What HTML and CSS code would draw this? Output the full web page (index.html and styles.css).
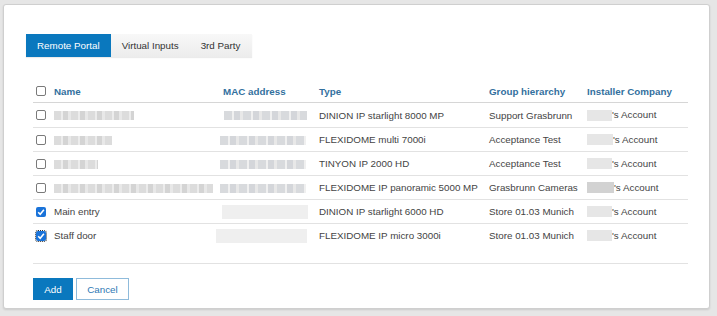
FILE: index.html
```html
<!DOCTYPE html>
<html>
<head>
<meta charset="utf-8">
<link rel="stylesheet" href="styles.css">
</head>
<body>
<div class="card">
  <div class="tabs">
    <div class="tab active">Remote Portal</div>
    <div class="tab">Virtual Inputs</div>
    <div class="tab last">3rd Party</div>
  </div>
  <div class="table">
    <div class="row head">
      <span class="cb"></span>
      <span>Name</span>
      <span>MAC address</span>
      <span>Type</span>
      <span>Group hierarchy</span>
      <span>Installer Company</span>
    </div>
    <div class="row">
      <span class="cb"></span>
      <span><i class="blur b1" style="width:80px"></i></span>
      <span><i class="blur b2" style="width:83px;margin-left:1px"></i></span>
      <span>DINION IP starlight 8000 MP</span>
      <span>Support Grasbrunn</span>
      <span class="acct"><i class="blur b3" style="width:25px"></i>'s Account</span>
    </div>
    <div class="row">
      <span class="cb"></span>
      <span><i class="blur b1" style="width:58px"></i></span>
      <span><i class="blur b2" style="width:86px;margin-left:-3px"></i></span>
      <span>FLEXIDOME multi 7000i</span>
      <span>Acceptance Test</span>
      <span class="acct"><i class="blur b3" style="width:26px"></i>'s Account</span>
    </div>
    <div class="row">
      <span class="cb"></span>
      <span><i class="blur b1" style="width:44px"></i></span>
      <span><i class="blur b2" style="width:86px;margin-left:-3px"></i></span>
      <span>TINYON IP 2000 HD</span>
      <span>Acceptance Test</span>
      <span class="acct"><i class="blur b3" style="width:25px"></i>'s Account</span>
    </div>
    <div class="row">
      <span class="cb"></span>
      <span><i class="blur b1" style="width:159px"></i></span>
      <span><i class="blur b2" style="width:86px;margin-left:-3px"></i></span>
      <span>FLEXIDOME IP panoramic 5000 MP</span>
      <span>Grasbrunn Cameras</span>
      <span class="acct"><i class="blur b4" style="width:27px"></i>'s Account</span>
    </div>
    <div class="row">
      <span class="cb on"><svg viewBox="0 0 10 10" width="10" height="10"><path d="M2.2 5.2 L4.2 7.2 L7.9 2.8" fill="none" stroke="#fff" stroke-width="1.6"/></svg></span>
      <span>Main entry</span>
      <span><i class="blur b5" style="width:86px;margin-left:-1px"></i></span>
      <span>DINION IP starlight 6000 HD</span>
      <span>Store 01.03 Munich</span>
      <span class="acct"><i class="blur b3" style="width:25px"></i>'s Account</span>
    </div>
    <div class="row last">
      <span class="cb on focus"><svg viewBox="0 0 10 10" width="10" height="10"><path d="M2.2 5.2 L4.2 7.2 L7.9 2.8" fill="none" stroke="#fff" stroke-width="1.6"/></svg></span>
      <span>Staff door</span>
      <span><i class="blur b5" style="width:91px;margin-left:-7px"></i></span>
      <span>FLEXIDOME IP micro 3000i</span>
      <span>Store 01.03 Munich</span>
      <span class="acct"><i class="blur b3" style="width:25px"></i>'s Account</span>
    </div>
  </div>
  <div class="footer">
    <button class="btn primary">Add</button>
    <button class="btn secondary">Cancel</button>
  </div>
</div>
</body>
</html>
```

FILE: styles.css
```css
html, body {
  margin: 0;
  padding: 0;
}
body {
  background: #e6e6e6;
  font-family: "Liberation Sans", Arial, sans-serif;
  font-size: 9.8px;
  color: #444;
  width: 717px;
  height: 316px;
  overflow: hidden;
}
.card {
  margin: 4px 7px 0 3px;
  height: 305px;
  box-sizing: border-box;
  background: #fff;
  border: 1px solid #cfcfcf;
  border-radius: 3px;
  box-shadow: 0 1px 2px rgba(0,0,0,0.12);
  padding: 29px 21px 0 22px;
}
.tabs {
  display: inline-flex;
  height: 23px;
  background: linear-gradient(#f8f8f8, #ececec);
  box-shadow: 0 1px 1px rgba(0,0,0,0.08);
  vertical-align: top;
}
.tab {
  display: flex;
  align-items: center;
  padding: 0 11px;
  color: #333;
  white-space: nowrap;
}
.tab.last { padding-right: 12px; }
.tab.active {
  background: #0a78be;
  color: #fff;
}
.table {
  margin: 23px 0 0 7px;
  width: 655px;
}
.row {
  display: grid;
  grid-template-columns: 21px 169px 96px 170px 98px 1fr;
  align-items: center;
  height: 24px;
  border-top: 1px solid #e2e2e2;
  box-sizing: border-box;
  white-space: nowrap;
}
.row.head {
  border-top: none;
  height: 23px;
  font-weight: bold;
  color: #33709e;
  border-bottom: 1px solid #d6d6d6;
}
.row.head + .row { border-top: none; }
.cb {
  display: block;
  width: 10px;
  height: 10px;
  margin-left: 3px;
  box-sizing: border-box;
  border: 1px solid #7a7a7a;
  border-radius: 2px;
  background: #fff;
}
.cb.on {
  border: none;
  background: #1a73d9;
}
.cb svg { display: block; }
.cb.focus {
  outline: 1px dotted #333;
  outline-offset: 0px;
}
.blur {
  display: inline-block;
  height: 9px;
  vertical-align: middle;
  filter: blur(0.7px);
}
.b1 {
  background: repeating-linear-gradient(90deg, #dcdcdc 0 7px, #ececec 7px 9px, #d4d4d4 9px 14px, #e8e8e8 14px 17px);
}
.b2 {
  background: repeating-linear-gradient(90deg, #d8dadd 0 8px, #f0f0f0 8px 10px, #d4d6da 10px 16px, #e8e8e8 16px 19px);
}
.b3 {
  height: 11px;
  background: #e6e6e6;
}
.b4 {
  height: 11px;
  background: #d2d2d2;
}
.b5 {
  height: 14px;
  background: #efefef;
}
.footer {
  margin: 16px 0 0 7px;
  width: 655px;
  border-top: 1px solid #e2e2e2;
  padding-top: 14px;
  display: flex;
  gap: 3px;
}
.btn {
  font-family: "Liberation Sans", Arial, sans-serif;
  font-size: 9.8px;
  height: 22px;
  box-sizing: border-box;
  border-radius: 0;
  padding: 0;
  cursor: pointer;
}
.btn.primary {
  width: 40px;
  background: #0a78be;
  border: 1px solid #0a78be;
  color: #fff;
}
.btn.secondary {
  width: 53px;
  background: #fff;
  border: 1px solid #8fbbdb;
  color: #2e78b4;
}
```
